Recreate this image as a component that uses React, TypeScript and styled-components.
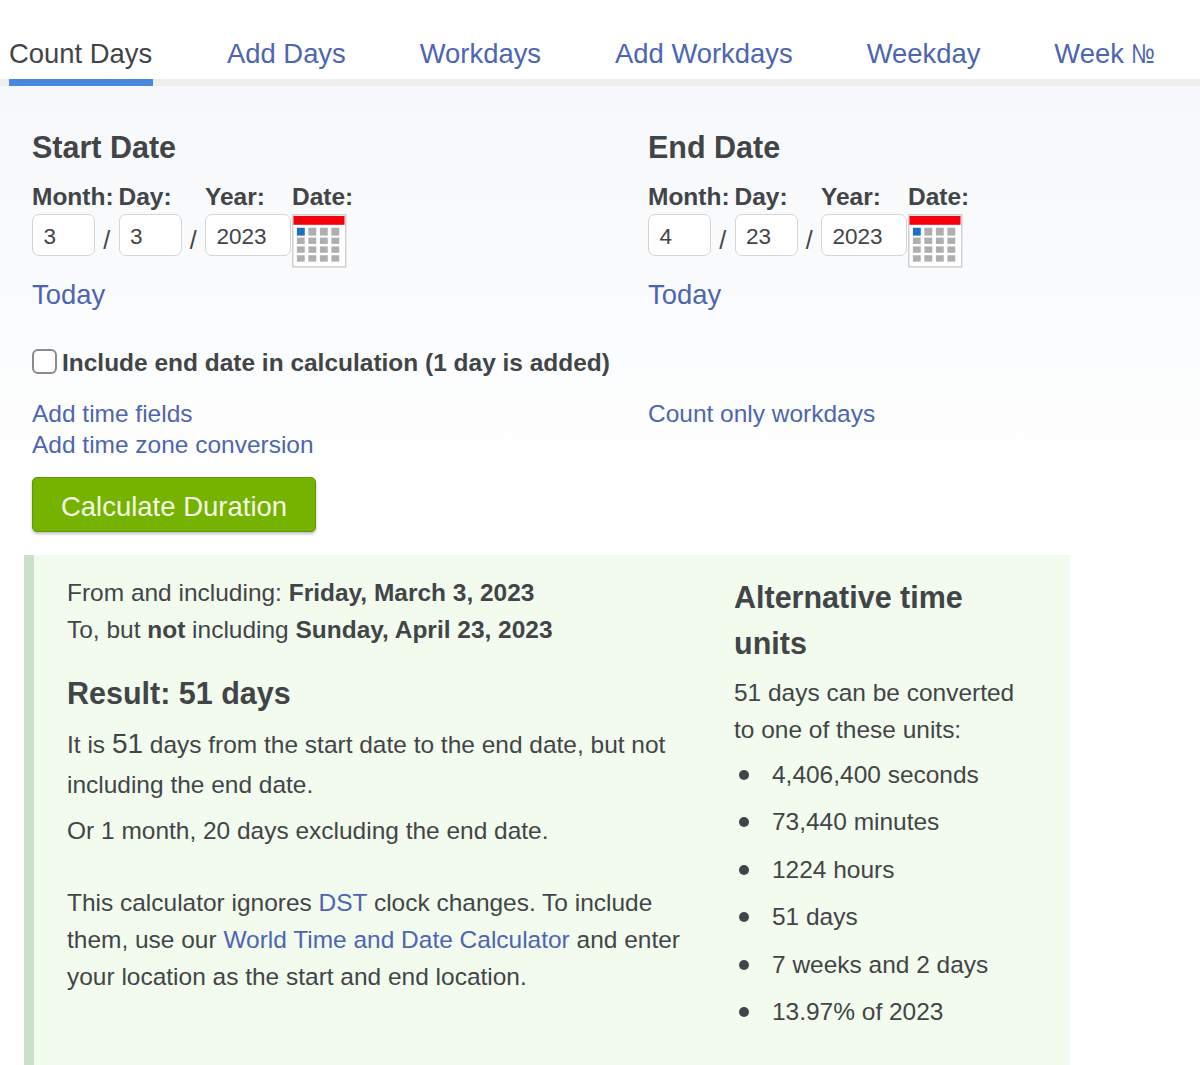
import React from "react";
import styled, { createGlobalStyle } from "styled-components";

const Global = createGlobalStyle`
  html, body { margin: 0; padding: 0; background: #fff; }
  body { font-family: "Liberation Sans", Arial, sans-serif; color: #424548; overflow: hidden; height: 1065px; }
  a { color: #4d65b2; text-decoration: none; }
`;

const Page = styled.div`
  width: 1200px;
  height: 1065px;
  overflow: hidden;
  background: #fff;
`;
const Tabs = styled.nav`
  display: flex;
  gap: 74px;
  height: 86px;
  padding-left: 9px;
  box-sizing: border-box;
  border-bottom: 7px solid #eeeeee;
`;
const Tab = styled.a<{ $active?: boolean }>`
  position: relative;
  font-size: 27.4px;
  line-height: 32px;
  padding-top: 38px;
  color: ${(p) => (p.$active ? "#424548" : "#4d65b2")};
  white-space: nowrap;
  ${(p) =>
    p.$active &&
    `min-width: 144px;
     &::after { content: ""; position: absolute; left: 0; right: 0; bottom: -7px; height: 7px; background: #4a88de; }`}
`;
const NumeroSign = styled.span`
  display: inline-block;
  transform: scaleX(0.8);
  transform-origin: left center;
`;
const Form = styled.div`
  background: linear-gradient(#f6f8fb 0, #fbfcfd 260px, #ffffff 400px);
  padding: 42px 0 0 32px;
  height: 469px;
  box-sizing: border-box;
`;
const Dates = styled.div`
  display: grid;
  grid-template-columns: 616px 1fr;
`;
const Heading = styled.h2`
  margin: 0;
  font-size: 30.5px;
  line-height: 38px;
  font-weight: 700;
`;
const Fields = styled.div`
  display: flex;
  align-items: flex-start;
  margin-top: 17px;
`;
const Field = styled.div<{ $w: number }>`
  width: ${(p) => p.$w}px;
  flex: none;
  font-size: 24.5px;
  line-height: 28px;
  font-weight: 700;
  white-space: nowrap;
`;
const Input = styled.div<{ $w: number }>`
  width: ${(p) => p.$w}px;
  height: 42px;
  box-sizing: border-box;
  margin-top: 3px;
  border: 1.5px solid #d5d5d5;
  border-radius: 7px;
  background: #fff;
  font-size: 22.5px;
  font-weight: 400;
  line-height: 43px;
  padding-left: 10.5px;
`;
const InputRow = styled.div`
  display: flex;
`;
const Slash = styled.span`
  width: 23.5px;
  text-align: center;
  font-size: 25px;
  font-weight: 400;
  line-height: 28px;
  margin-top: 15px;
`;
const Cal = styled.svg`
  display: block;
  margin-top: 3px;
`;
const TodayLink = styled.a`
  display: block;
  font-size: 27.4px;
  line-height: 32px;
  margin-top: 10px;
`;
const Check = styled.label`
  display: flex;
  align-items: center;
  gap: 5px;
  margin-top: 36px;
  font-size: 24.47px;
  line-height: 32px;
  font-weight: 700;
`;
const Box = styled.span`
  width: 25px;
  height: 25px;
  box-sizing: border-box;
  border: 2px solid #8a8a8a;
  border-radius: 6px;
  background: #fff;
  margin-top: -4px;
`;
const Links = styled.div`
  display: grid;
  grid-template-columns: 616px 1fr;
  margin-top: 19px;
  font-size: 24.47px;
  line-height: 31px;
  a { display: block; }
`;
const Button = styled.button`
  display: block;
  margin-top: 17px;
  width: 284px;
  height: 55px;
  padding: 5px 0 0;
  background: #76b200;
  border: 1px solid #639500;
  border-radius: 5px;
  box-shadow: 0 2px 3px rgba(0, 0, 0, 0.25);
  color: #f4fbe6;
  font: 27.5px "Liberation Sans", Arial, sans-serif;
`;
const Result = styled.section`
  display: grid;
  grid-template-columns: 667px 1fr;
  box-sizing: border-box;
  margin-left: 24px;
  width: 1046px;
  height: 510px;
  background: #f2fbee;
  border-left: 10px solid #cbe0c8;
  padding: 19px 0 0 33px;
  font-size: 24.47px;
  line-height: 37px;
`;
const ResultCol = styled.div`
  width: 625px;
`;
const P = styled.p<{ $top?: number }>`
  margin: ${(p) => p.$top ?? 0}px 0 0;
`;
const ResultTitle = styled.h3`
  margin: 25px 0 0;
  font-size: 30.5px;
  line-height: 40px;
  font-weight: 700;
`;
const Big = styled.span`
  font-size: 28px;
  line-height: 45px;
`;
const AltTitle = styled.h3`
  margin: 0;
  font-size: 30.5px;
  line-height: 46px;
  font-weight: 700;
`;
const Side = styled.div`
  width: 300px;
`;
const List = styled.ul`
  list-style: none;
  margin: 8px 0 0;
  padding: 0;
`;
const Item = styled.li`
  position: relative;
  padding-left: 38px;
  margin-bottom: 10.4px;
  &::before {
    content: "";
    position: absolute;
    left: 5px;
    top: 14px;
    width: 10px;
    height: 10px;
    border-radius: 50%;
    background: #424548;
  }
`;

const Calendar = () => (
  <Cal width="55" height="55" viewBox="0 0 56 56">
    <rect x="0.75" y="0.75" width="54" height="53" fill="#fff" stroke="#d0d0d0" strokeWidth="1.5" />
    <rect x="1.5" y="2" width="52" height="9" fill="#f4000c" />
    {[0, 1, 2, 3].flatMap((r) =>
      [0, 1, 2, 3].map((c) => (
        <rect
          key={`${r}-${c}`}
          x={5 + c * 11.7}
          y={r === 0 ? 14 : 24 + (r - 1) * 9}
          width="8"
          height={r === 0 ? 8 : 6.5}
          fill={r === 0 && c === 0 ? "#1d6fc0" : "#b0afb0"}
        />
      ))
    )}
  </Cal>
);

const DateBlock = ({ title, m, d, y }: { title: string; m: string; d: string; y: string }) => (
  <div>
    <Heading>{title}</Heading>
    <Fields>
      <Field $w={86.5}>
        Month:
        <InputRow>
          <Input $w={63}>{m}</Input>
          <Slash>/</Slash>
        </InputRow>
      </Field>
      <Field $w={86.5}>
        Day:
        <InputRow>
          <Input $w={63}>{d}</Input>
          <Slash>/</Slash>
        </InputRow>
      </Field>
      <Field $w={87}>
        Year:
        <InputRow>
          <Input $w={86}>{y}</Input>
        </InputRow>
      </Field>
      <Field $w={62}>
        Date:
        <Calendar />
      </Field>
    </Fields>
    <TodayLink href="#">Today</TodayLink>
  </div>
);

export default function App() {
  return (
    <Page>
      <Global />
      <Tabs>
        <Tab $active href="#">Count Days</Tab>
        <Tab href="#">Add Days</Tab>
        <Tab href="#">Workdays</Tab>
        <Tab href="#">Add Workdays</Tab>
        <Tab href="#">Weekday</Tab>
        <Tab href="#">Week <NumeroSign>№</NumeroSign></Tab>
      </Tabs>
      <Form>
        <Dates>
          <DateBlock title="Start Date" m="3" d="3" y="2023" />
          <DateBlock title="End Date" m="4" d="23" y="2023" />
        </Dates>
        <Check>
          <Box />
          Include end date in calculation (1 day is added)
        </Check>
        <Links>
          <div>
            <a href="#">Add time fields</a>
            <a href="#">Add time zone conversion</a>
          </div>
          <div>
            <a href="#">Count only workdays</a>
          </div>
        </Links>
        <Button>Calculate Duration</Button>
      </Form>
      <Result>
        <ResultCol>
          <P>From and including: <b>Friday, March 3, 2023</b></P>
          <P>To, but <b>not</b> including <b>Sunday, April 23, 2023</b></P>
          <ResultTitle>Result: 51 days</ResultTitle>
          <P $top={8}>It is <Big>51</Big> days from the start date to the end date, but not including the end date.</P>
          <P $top={9}>Or 1 month, 20 days excluding the end date.</P>
          <P $top={35}>
            This calculator ignores <a href="#">DST</a> clock changes. To include them, use our{" "}
            <a href="#">World Time and Date Calculator</a> and enter your location as the start and end location.
          </P>
        </ResultCol>
        <Side>
          <AltTitle>Alternative time units</AltTitle>
          <P $top={8}>51 days can be converted to one of these units:</P>
          <List>
            <Item>4,406,400 seconds</Item>
            <Item>73,440 minutes</Item>
            <Item>1224 hours</Item>
            <Item>51 days</Item>
            <Item>7 weeks and 2 days</Item>
            <Item>13.97% of 2023</Item>
          </List>
        </Side>
      </Result>
    </Page>
  );
}
